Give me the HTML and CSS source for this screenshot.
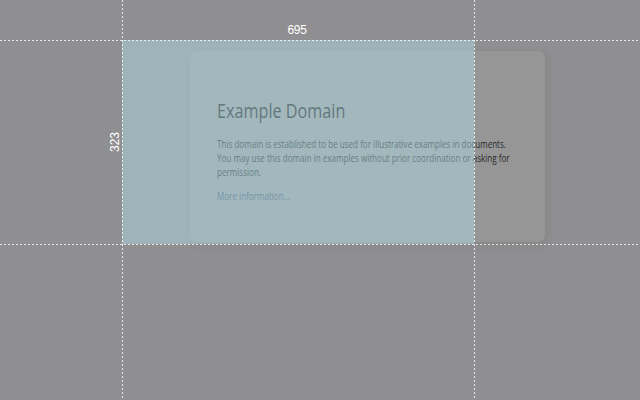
FILE: index.html
```html
<!DOCTYPE html>
<html lang="en">
<head>
<meta charset="utf-8">
<title>Example Domain</title>
<link rel="stylesheet" href="styles.css">
</head>
<body>
<div class="card">
  <h1 class="title">Example Domain</h1>
  <p class="text">This domain is established to be used for illustrative examples in documents. You may use this domain in examples without prior coordination or asking for permission.</p>
  <p class="text"><a class="link" href="#">More information...</a></p>
</div>
<div class="highlight"></div>
<div class="guide guide-h guide-top"></div>
<div class="guide guide-h guide-bottom"></div>
<div class="guide guide-v guide-left"></div>
<div class="guide guide-v guide-right"></div>
<div class="label label-w">695</div>
<div class="label label-h">323</div>
</body>
</html>
```
FILE: styles.css
```css
html, body {
  margin: 0;
  padding: 0;
}
body {
  width: 640px;
  height: 400px;
  overflow: hidden;
  position: relative;
  background: #8f8e90;
  font-family: "Open Sans", "Liberation Sans", sans-serif;
  color: #1e1e1e;
}
.card {
  box-sizing: border-box;
  margin: 51px 0 0 190px;
  width: 355px;
  height: 191px;
  padding: 46px 0 0 27px;
  background: #969696;
  border-radius: 6px / 7px;
  box-shadow: 2px 3px 7px 2px rgba(0, 0, 0, 0.05);
}
.title {
  margin: 0 0 13.5px;
  font-size: 20.25px;
  line-height: 27.6px;
  font-weight: 400;
  white-space: nowrap;
  transform: scaleX(0.8);
  transform-origin: left top;
}
.text {
  width: 381px;
  margin: 0 0 10.5px;
  font-size: 10.1px;
  line-height: 13.8px;
  color: #2a2a2a;
  transform: scaleX(0.8);
  transform-origin: left top;
}
.link {
  color: #44526e;
  text-decoration: none;
}
.highlight {
  position: absolute;
  left: 122px;
  top: 40px;
  width: 352px;
  height: 204px;
  background: rgba(178, 226, 237, 0.45);
}
.guide {
  position: absolute;
  opacity: 0.8;
}
.guide-h {
  left: 0;
  width: 640px;
  height: 1px;
  background: repeating-linear-gradient(to right, #ffffff 0 2px, transparent 2px 4px);
}
.guide-v {
  top: 0;
  width: 1px;
  height: 400px;
  background: repeating-linear-gradient(to bottom, #ffffff 0 2px, transparent 2px 4px);
}
.guide-top { top: 40px; }
.guide-bottom { top: 244px; }
.guide-left { left: 122px; }
.guide-right { left: 474px; }
.label {
  position: absolute;
  font-family: "Liberation Sans", Arial, sans-serif;
  font-size: 12px;
  line-height: 14px;
  color: #ffffff;
  width: 40px;
  text-align: center;
}
.label-w {
  left: 277px;
  top: 23px;
  letter-spacing: -0.4px;
}
.label-h {
  left: 95px;
  top: 135px;
  transform: rotate(-90deg);
}
```
